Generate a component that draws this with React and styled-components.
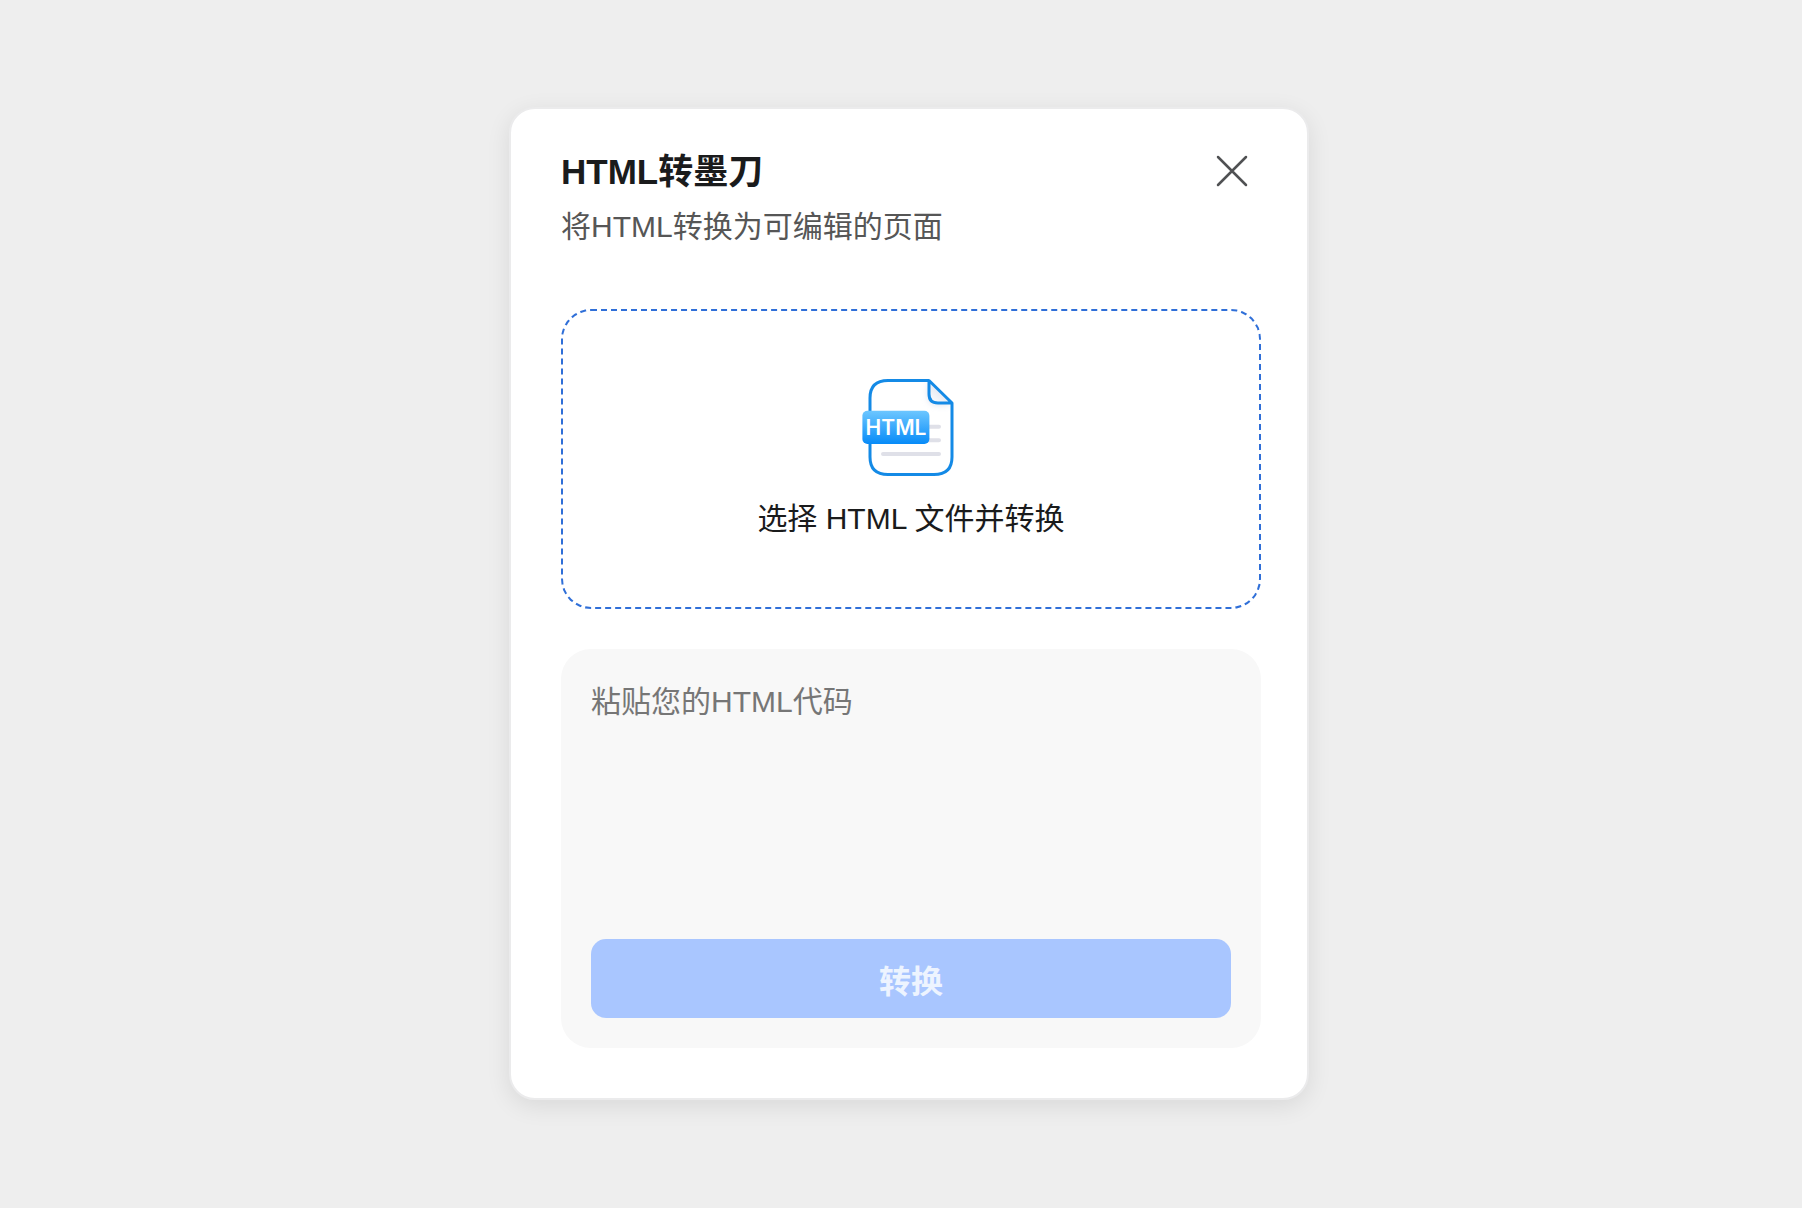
import React, { useState } from 'react';
import styled, { createGlobalStyle } from 'styled-components';

const App = () => {
  const [code, setCode] = useState('');

  return (
    <Page>
      <GlobalStyle />
      <Dialog role="dialog" aria-labelledby="dialog-title">
        <Header>
          <div>
            <Title id="dialog-title">HTML转墨刀</Title>
            <Subtitle>将HTML转换为可编辑的页面</Subtitle>
          </div>
          <CloseButton type="button" aria-label="关闭">
            <CloseIcon />
          </CloseButton>
        </Header>

        <DropZone htmlFor="html-file">
          <FileInput id="html-file" type="file" accept=".html,.htm" />
          <HtmlFileIcon />
          <DropLabel>选择 HTML 文件并转换</DropLabel>
        </DropZone>

        <CodePanel>
          <CodeInput
            aria-label="粘贴您的HTML代码"
            placeholder="粘贴您的HTML代码"
            value={code}
            onChange={(e) => setCode(e.target.value)}
          />
          <ConvertButton type="button" disabled={!code.trim()}>转换</ConvertButton>
        </CodePanel>
      </Dialog>
    </Page>
  );
};

const CloseIcon = () => (
  <svg width="32" height="32" viewBox="0 0 32 32" fill="none" aria-hidden="true">
    <path d="M2 2L30 30M30 2L2 30" stroke="#505153" strokeWidth="2.5" strokeLinecap="round" />
  </svg>
);

const HtmlFileIcon = () => (
  <svg width="100" height="100" viewBox="21 17 100 100" fill="none" aria-hidden="true">
    <defs>
      <linearGradient id="badge" x1="56" y1="51" x2="56" y2="84" gradientUnits="userSpaceOnUse">
        <stop stopColor="#6cc6ff" />
        <stop offset="1" stopColor="#078bf8" />
      </linearGradient>
      <linearGradient id="fold" x1="104" y1="28" x2="90" y2="44" gradientUnits="userSpaceOnUse">
        <stop stopColor="#dfe3ee" />
        <stop offset="1" stopColor="#ffffff" />
      </linearGradient>
      <filter id="fold-shadow" x="70" y="10" width="56" height="56" filterUnits="userSpaceOnUse">
        <feGaussianBlur stdDeviation="3" />
      </filter>
      <clipPath id="sheet">
        <path d="M30 38C30 26 36 20.5 48 20.5H89L112 43V97C112 109 106 114.5 94 114.5H48C36 114.5 30 109 30 97Z" />
      </clipPath>
    </defs>
    <g clipPath="url(#sheet)">
      <path d="M88 21V36Q88 45 97 45H112Z" fill="#b9c4dc" opacity="0.5" filter="url(#fold-shadow)" />
    </g>
    <path d="M89 20.5V34Q89 43 98 43H112Z" fill="url(#fold)" />
    <path
      d="M89 20.5H48C36 20.5 30 26 30 38V97C30 109 36 114.5 48 114.5H94C106 114.5 112 109 112 97V43L89 20.5V34Q89 43 98 43H112"
      stroke="#148ae6"
      strokeWidth="3"
      strokeLinejoin="round"
    />
    <path d="M80 66.8H99M80 80.3H99M43 94H99" stroke="#dfe0e8" strokeWidth="4" strokeLinecap="round" />
    <rect x="22.4" y="50.8" width="67" height="33.2" rx="5" fill="url(#badge)" />
    <text x="56" y="75" textAnchor="middle" fill="#fff" fontFamily="Inter, sans-serif" fontSize="21" fontWeight="600">
      HTML
    </text>
  </svg>
);

const GlobalStyle = createGlobalStyle`
  * {
    box-sizing: border-box;
  }

  body {
    margin: 0;
    background: #eeeeee;
  }

  body, button, textarea {
    font-family: 'Liberation Sans', 'Noto Sans CJK SC', sans-serif;
  }
`;

const Page = styled.main`
  min-height: 100vh;
  padding: 40px 0 41px 16px;
  display: flex;
  align-items: center;
  justify-content: center;
`;

const Dialog = styled.section`
  width: 100%;
  max-width: 800px;
  padding: 36px 46px 50px 50px;
  background: #ffffff;
  border: 2px solid #ebebec;
  border-radius: 26px;
  box-shadow: 0 6px 24px rgba(0, 0, 0, 0.09);
`;

const Header = styled.header`
  display: flex;
  align-items: flex-start;
  justify-content: space-between;
  margin-bottom: 60px;
`;

const Title = styled.h1`
  margin: 0 0 6px;
  font-size: 35px;
  line-height: 54px;
  font-weight: 700;
  color: #1a1b1c;
`;

const Subtitle = styled.p`
  margin: 0;
  font-size: 30px;
  line-height: 44px;
  color: #565656;
`;

const CloseButton = styled.button`
  display: flex;
  margin: 10px 13px 0 0;
  padding: 0;
  border: 0;
  background: none;
  cursor: pointer;
`;

const DropZone = styled.label`
  display: flex;
  flex-direction: column;
  align-items: center;
  justify-content: center;
  gap: 20px;
  min-height: 300px;
  margin-bottom: 40px;
  border: 2px dashed #2f6fd8;
  border-radius: 30px;
  cursor: pointer;
`;

const FileInput = styled.input`
  position: absolute;
  width: 1px;
  height: 1px;
  opacity: 0;
`;

const DropLabel = styled.span`
  font-size: 30px;
  line-height: 44px;
  color: #1a1b1c;
`;

const CodePanel = styled.div`
  display: flex;
  flex-direction: column;
  gap: 20px;
  padding: 30px;
  background: #f8f8f8;
  border-radius: 30px;
`;

const CodeInput = styled.textarea`
  height: 240px;
  padding: 0;
  border: 0;
  outline: 0;
  resize: none;
  background: transparent;
  font-size: 30px;
  line-height: 46px;
  color: #1a1b1c;

  &::placeholder {
    color: #767676;
  }
`;

const ConvertButton = styled.button`
  height: 79px;
  padding: 0;
  border: 0;
  border-radius: 15px;
  background: #2f6fff;
  font-size: 32px;
  font-weight: 700;
  color: #ffffff;
  cursor: pointer;

  &:disabled {
    background: #a9c6ff;
    color: #edf4ff;
    cursor: default;
  }
`;

export default App;
